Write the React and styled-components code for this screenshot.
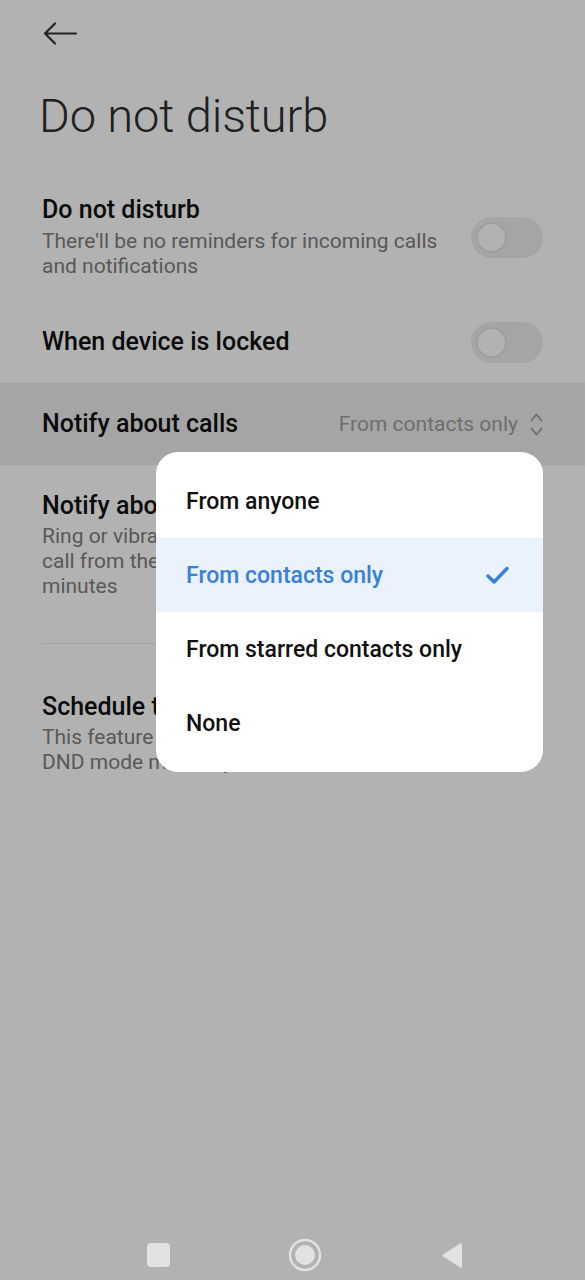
import React from "react";
import styled, { createGlobalStyle } from "styled-components";

const GlobalStyle = createGlobalStyle`
  html, body {
    margin: 0;
    padding: 0;
    background: #ffffff;
  }
  body {
    font-family: Roboto, "Noto Sans", "Liberation Sans", sans-serif;
    -webkit-font-smoothing: antialiased;
  }
  * {
    box-sizing: border-box;
  }
`;

const Screen = styled.div`
  position: relative;
  min-height: 100vh;
  display: flex;
  flex-direction: column;
  background: #ffffff;
`;

const Header = styled.div`
  height: 66px;
  display: flex;
  align-items: center;
  padding-left: 43px;
`;

const Title = styled.h1`
  margin: 22px 0 29px;
  padding: 0 39px;
  font-size: 47px;
  line-height: 56px;
  font-weight: 300;
  color: #2e2e2e;
  letter-spacing: -0.1px;
`;

const Row = styled.div`
  display: flex;
  align-items: center;
  justify-content: space-between;
  gap: 30px;
  padding: ${(p) => (p.$tall ? "16px" : "20px")} 42px;
  background: ${(p) => (p.$active ? "#ededed" : "transparent")};
`;

const RowText = styled.div`
  display: flex;
  flex-direction: column;
  flex: 1;
  min-width: 0;
  padding: 6px 0;
`;

const RowTitle = styled.div`
  font-size: 25px;
  line-height: 30px;
  font-weight: 500;
  color: #111111;
  white-space: nowrap;
`;

const RowSub = styled.div`
  margin-top: ${(p) => p.$gap || 3}px;
  font-size: 21px;
  line-height: 25px;
  color: #808080;
  max-width: ${(p) => p.$max || 400}px;
`;

const Value = styled.div`
  display: flex;
  align-items: center;
  gap: 12px;
  font-size: 21px;
  color: #9e9e9e;
  white-space: nowrap;
`;

const Track = styled.div`
  flex: none;
  position: relative;
  width: 72px;
  height: 41px;
  border-radius: 21px;
  background: #ededed;
`;

const Knob = styled.div`
  position: absolute;
  left: 5px;
  top: 5px;
  width: 31px;
  height: 31px;
  border-radius: 50%;
  background: #ffffff;
  border: 2px solid #e3e3e3;
`;

const Divider = styled.div`
  margin: 18px 42px 22px;
  height: 1px;
  background: #e8e8e8;
`;

const Scrim = styled.div`
  position: fixed;
  inset: 0;
  background: rgba(0, 0, 0, 0.3);
  z-index: 1;
`;

const NavBar = styled.div`
  position: relative;
  z-index: 2;
  margin-top: auto;
  height: 50px;
  display: flex;
  align-items: center;
  padding-left: 147px;
`;

const NavSlot = styled.div`
  display: flex;
  align-items: center;
  justify-content: center;
  width: ${(p) => p.$w}px;
`;

const Menu = styled.div`
  position: absolute;
  z-index: 3;
  top: 452px;
  left: 156px;
  width: 387px;
  padding: 12px 0;
  background: #ffffff;
  border-radius: 22px;
`;

const MenuItem = styled.div`
  height: 74px;
  display: flex;
  align-items: center;
  justify-content: space-between;
  padding: 0 34px 0 30px;
  font-size: 23px;
  font-weight: 500;
  color: ${(p) => (p.$selected ? "#3a7fd8" : "#111111")};
  background: ${(p) => (p.$selected ? "#e9f2fd" : "transparent")};
`;

const BackArrow = () => (
  <svg width="34" height="23" viewBox="0 0 34 23" fill="none">
    <path
      d="M33 11.5H2M12 1.5L2 11.5L12 21.5"
      stroke="#333"
      strokeWidth="2.2"
      strokeLinecap="round"
      strokeLinejoin="round"
    />
  </svg>
);

const UpDown = () => (
  <svg width="13" height="25" viewBox="0 0 13 25" fill="none">
    <path
      d="M1.5 8.5L6.5 2.5L11.5 8.5M1.5 16.5L6.5 22.5L11.5 16.5"
      stroke="#9e9e9e"
      strokeWidth="1.8"
      strokeLinecap="round"
      strokeLinejoin="round"
    />
  </svg>
);

const Check = () => (
  <svg width="23" height="19" viewBox="0 0 23 19" fill="none">
    <path
      d="M2 10L8 16L21 2.5"
      stroke="#3a7fd8"
      strokeWidth="3.4"
      strokeLinecap="round"
      strokeLinejoin="round"
    />
  </svg>
);

const Toggle = () => (
  <Track>
    <Knob />
  </Track>
);

const options = [
  "From anyone",
  "From contacts only",
  "From starred contacts only",
  "None",
];

export default function App() {
  const selected = "From contacts only";
  return (
    <>
      <GlobalStyle />
      <Screen>
        <Header>
          <BackArrow />
        </Header>
        <Title>Do not disturb</Title>

        <Row $tall>
          <RowText>
            <RowTitle>Do not disturb</RowTitle>
            <RowSub $gap={4}>
              There'll be no reminders for incoming calls and notifications
            </RowSub>
          </RowText>
          <Toggle />
        </Row>

        <Row>
          <RowText>
            <RowTitle>When device is locked</RowTitle>
          </RowText>
          <Toggle />
        </Row>

        <Row $active>
          <RowText>
            <RowTitle>Notify about calls</RowTitle>
          </RowText>
          <Value>
            From contacts only
            <UpDown />
          </Value>
        </Row>

        <Row>
          <RowText>
            <RowTitle>Notify about repeated calls</RowTitle>
            <RowSub $max={375}>
              Ring or vibrate if you receive a second call from the same number within 15
              minutes
            </RowSub>
          </RowText>
          <Toggle />
        </Row>

        <Divider />

        <Row>
          <RowText>
            <RowTitle>Schedule turn on</RowTitle>
            <RowSub $max={375}>
              This feature won't work if you turn on DND mode manually
            </RowSub>
          </RowText>
        </Row>

        <Scrim />

        <NavBar>
          <NavSlot $w={23}>
            <svg width="23" height="24" viewBox="0 0 23 24">
              <rect x="0" y="0" width="23" height="24" rx="4" fill="#e2e2e2" />
            </svg>
          </NavSlot>
          <NavSlot $w={270}>
            <svg width="34" height="34" viewBox="0 0 34 34" fill="none">
              <circle cx="17" cy="17" r="15" stroke="#e2e2e2" strokeWidth="2.4" />
              <circle cx="17" cy="17" r="10" fill="#e2e2e2" />
            </svg>
          </NavSlot>
          <NavSlot $w={24}>
            <svg width="23" height="27" viewBox="0 0 23 27">
              <path
                d="M21 2.5V24.5C21 25.4 20.1 25.9 19.3 25.4L2.2 14.6C1.5 14.1 1.5 12.9 2.2 12.4L19.3 1.6C20.1 1.1 21 1.6 21 2.5Z"
                fill="#e2e2e2"
              />
            </svg>
          </NavSlot>
        </NavBar>

        <Menu>
          {options.map((o) => (
            <MenuItem key={o} $selected={o === selected}>
              {o}
              {o === selected && <Check />}
            </MenuItem>
          ))}
        </Menu>
      </Screen>
    </>
  );
}
